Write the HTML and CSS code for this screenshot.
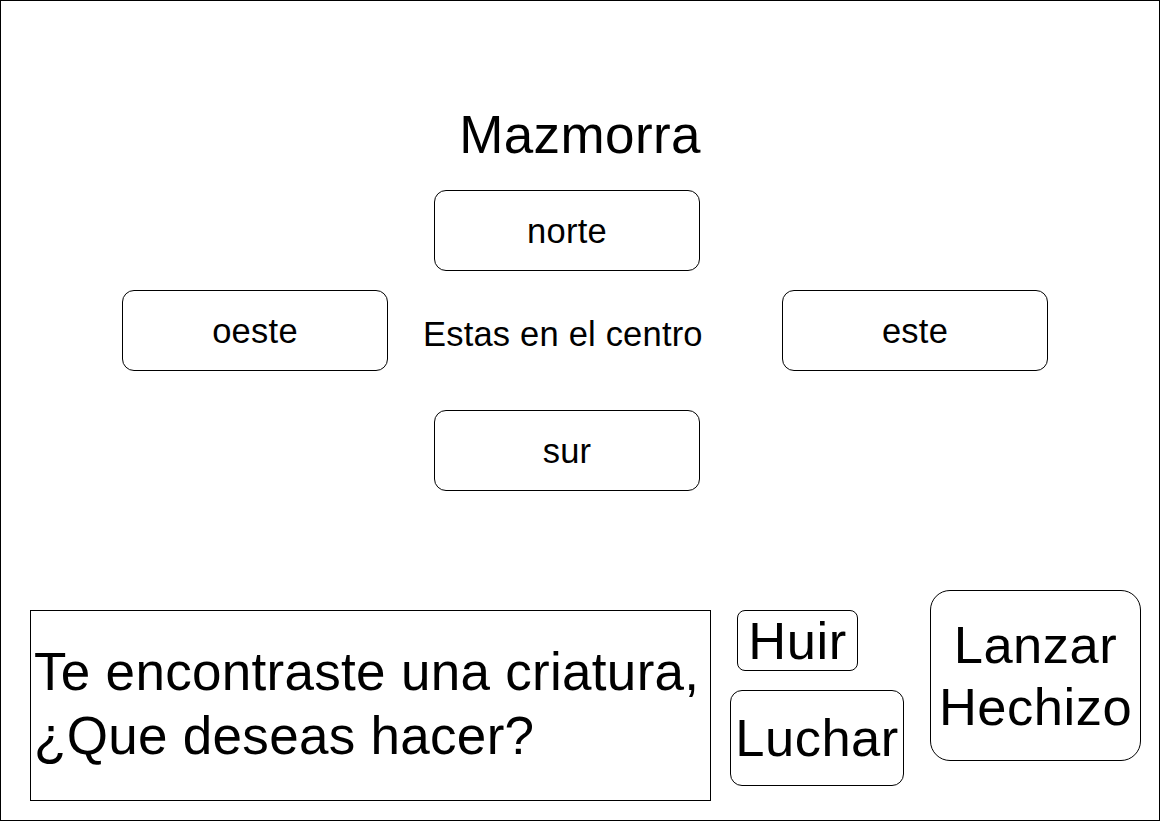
FILE: index.html
```html
<!DOCTYPE html>
<html lang="es">
<head>
<meta charset="utf-8">
<title>Mazmorra</title>
<link rel="stylesheet" href="styles.css">
</head>
<body>
<div class="frame">
  <h1 class="title">Mazmorra</h1>
  <div class="compass">
    <div class="row row-top">
      <div class="btn dir">norte</div>
    </div>
    <div class="row row-mid">
      <div class="btn dir">oeste</div>
      <div class="status">Estas en el centro</div>
      <div class="btn dir">este</div>
    </div>
    <div class="row row-bot">
      <div class="btn dir">sur</div>
    </div>
  </div>
  <div class="encounter">
    <div class="message">Te encontraste una criatura,<br>¿Que deseas hacer?</div>
    <div class="actions">
      <div class="btn big huir">Huir</div>
      <div class="btn big luchar">Luchar</div>
    </div>
    <div class="btn big hechizo">Lanzar<br>Hechizo</div>
  </div>
</div>
</body>
</html>
```

FILE: styles.css
```css
html, body {
  margin: 0;
  padding: 0;
  background: #ffffff;
}

body {
  font-family: "Liberation Sans", Arial, sans-serif;
  color: #000000;
}

.frame {
  box-sizing: border-box;
  width: 1160px;
  height: 821px;
  border: 1px solid #000000;
  overflow: hidden;
}

.title {
  margin: 104px 0 0 0;
  font-size: 53px;
  font-weight: normal;
  line-height: 60px;
  letter-spacing: 0.4px;
  text-align: center;
}

.btn {
  box-sizing: border-box;
  border: 1px solid #000000;
  background: #ffffff;
  display: flex;
  align-items: center;
  justify-content: center;
  text-align: center;
}

.dir {
  width: 266px;
  height: 81px;
  border-radius: 12px;
  font-size: 34.5px;
  line-height: 40px;
  letter-spacing: 0.25px;
}

.row-top {
  margin-top: 25px;
  padding-left: 433px;
}

.row-mid {
  margin-top: 19px;
  padding-left: 121px;
  display: grid;
  grid-template-columns: 266px 394px 266px;
  align-items: start;
}

.status {
  margin: 24px 0 0 35px;
  font-size: 34.5px;
  line-height: 40px;
  letter-spacing: 0.2px;
  white-space: nowrap;
}

.row-bot {
  margin-top: 39px;
  padding-left: 433px;
}

.encounter {
  margin-top: 99px;
  padding-left: 29px;
  display: flex;
  align-items: flex-start;
}

.message {
  box-sizing: border-box;
  width: 681px;
  height: 191px;
  margin-top: 20px;
  border: 1px solid #000000;
  padding: 0 0 4px 3px;
  display: flex;
  align-items: center;
  font-size: 53px;
  line-height: 64px;
  letter-spacing: 0.3px;
  white-space: nowrap;
}

.actions {
  display: flex;
  flex-direction: column;
  align-items: flex-start;
  margin-left: 19px;
}

.big {
  font-size: 52.5px;
  line-height: 62px;
  letter-spacing: 0.5px;
}

.huir {
  width: 121px;
  height: 61px;
  margin-top: 20px;
  margin-left: 7px;
  border-radius: 8px;
}

.luchar {
  width: 174px;
  height: 96px;
  margin-top: 19px;
  border-radius: 12px;
}

.hechizo {
  width: 211px;
  height: 171px;
  margin-left: 26px;
  border-radius: 20px;
}
```
